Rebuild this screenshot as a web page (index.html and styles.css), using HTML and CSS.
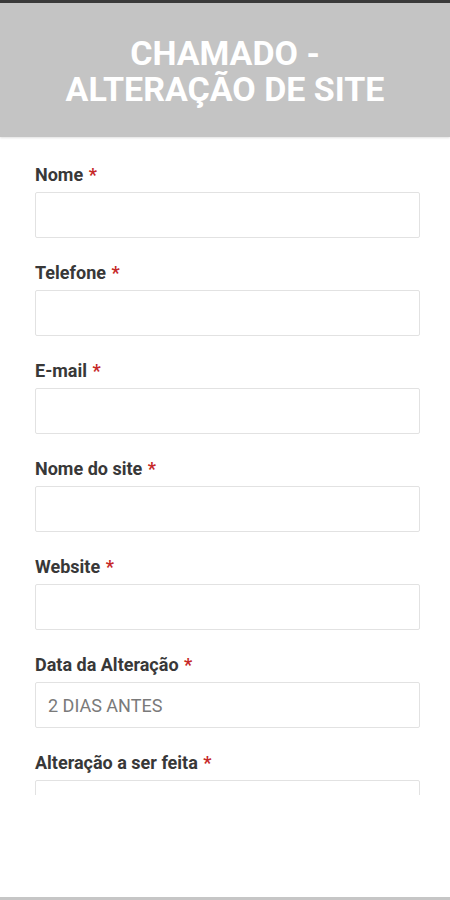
FILE: index.html
```html
<!DOCTYPE html>
<html lang="pt-BR">
<head>
<meta charset="utf-8">
<title>Chamado - Alteração de Site</title>
<link rel="stylesheet" href="styles.css">
</head>
<body>
<div class="screen">
  <header class="header">
    <h1 class="title"><span class="title-line">CHAMADO -</span><span class="title-line">ALTERAÇÃO DE SITE</span></h1>
  </header>
  <main class="form-view">
    <form class="form">
      <div class="field">
        <label class="label">Nome <span class="req">*</span></label>
        <div class="input"></div>
      </div>
      <div class="field">
        <label class="label">Telefone <span class="req">*</span></label>
        <div class="input"></div>
      </div>
      <div class="field">
        <label class="label">E-mail <span class="req">*</span></label>
        <div class="input"></div>
      </div>
      <div class="field">
        <label class="label">Nome do site <span class="req">*</span></label>
        <div class="input"></div>
      </div>
      <div class="field">
        <label class="label">Website <span class="req">*</span></label>
        <div class="input"></div>
      </div>
      <div class="field">
        <label class="label">Data da Alteração <span class="req">*</span></label>
        <div class="input"><span class="placeholder">2 DIAS ANTES</span></div>
      </div>
      <div class="field">
        <label class="label">Alteração a ser feita <span class="req">*</span></label>
        <div class="input tall"></div>
      </div>
    </form>
  </main>
  <div class="spacer"></div>
</div>
</body>
</html>
```
FILE: styles.css
```css
html, body {
  margin: 0;
  padding: 0;
  background: #ffffff;
}
.screen {
  width: 450px;
  height: 900px;
  box-sizing: border-box;
  border-top: 3px solid #3a3a3a;
  border-bottom: 3px solid #c6c6c6;
  display: flex;
  flex-direction: column;
  font-family: Roboto, "Liberation Sans", sans-serif;
  overflow: hidden;
}
.header {
  height: 134px;
  flex: none;
  background: #c4c4c4;
  display: flex;
  align-items: center;
  justify-content: center;
  box-shadow: 0 1px 2px rgba(0,0,0,0.12);
  position: relative;
  z-index: 1;
}
.title {
  margin: 0;
  padding-top: 2px;
  color: #ffffff;
  font-size: 34px;
  font-weight: 700;
  line-height: 36px;
  text-align: center;
  display: flex;
  flex-direction: column;
  align-items: center;
}
.title-line {
  display: block;
  height: 36px;
  line-height: 36px;
}
.form-view {
  height: 658px;
  flex: none;
  overflow: hidden;
}
.form {
  padding: 27px 30px 0 35px;
  display: flex;
  flex-direction: column;
  gap: 24px;
}
.field {
  display: flex;
  flex-direction: column;
  gap: 6px;
}
.label {
  font-size: 18px;
  font-weight: 700;
  line-height: 22px;
  color: #383838;
}
.req {
  color: #c62828;
  margin-left: 1px;
}
.input {
  height: 46px;
  box-sizing: border-box;
  border: 1px solid #e2e2e2;
  border-radius: 2px;
  background: #ffffff;
  display: flex;
  align-items: center;
  padding: 0 12px;
}
.input.tall {
  height: 120px;
}
.placeholder {
  font-size: 18px;
  color: #7a7a7a;
}
.spacer {
  flex: 1;
}
```
